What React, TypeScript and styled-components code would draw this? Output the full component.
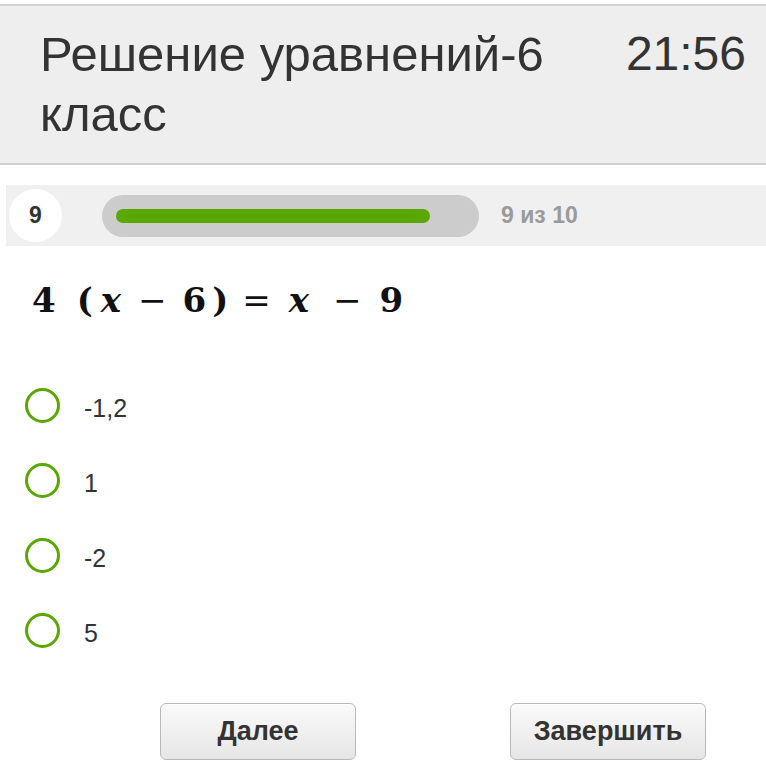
import React from "react";
import styled, { createGlobalStyle } from "styled-components";

const Global = createGlobalStyle`
  html, body { margin: 0; padding: 0; background: #ffffff; }
  body { font-family: "Liberation Sans", Arial, sans-serif; color: #333333; }
  * { box-sizing: border-box; }
`;

const Page = styled.div`
  width: 766px;
  height: 762px;
  overflow: hidden;
  padding-top: 4px;
  display: flex;
  flex-direction: column;
`;

const Header = styled.header`
  display: flex;
  justify-content: space-between;
  align-items: flex-start;
  background: #eeeeee;
  border-top: 2px solid #d4d4d4;
  border-bottom: 2px solid #d0d0d0;
  padding: 18px 20px 17px 40px;
  height: 161px;
`;

const Title = styled.h1`
  margin: 0;
  font-weight: normal;
  font-size: 49px;
  line-height: 60px;
  color: #333333;
  width: 550px;
`;

const Timer = styled.div`
  font-size: 48px;
  line-height: 60px;
  color: #333333;
`;

const ProgressRow = styled.div`
  margin: 20px 0 0 6px;
  height: 61px;
  background: #f0f0f0;
  display: flex;
  align-items: center;
  padding-left: 3px;
`;

const NumberBadge = styled.div`
  width: 53px;
  height: 53px;
  border-radius: 50%;
  background: #ffffff;
  display: flex;
  align-items: center;
  justify-content: center;
  font-weight: bold;
  font-size: 23px;
  color: #333333;
`;

const Track = styled.div`
  margin-left: 40px;
  width: 377px;
  height: 42px;
  border-radius: 21px;
  background: #cccccc;
  display: flex;
  align-items: center;
  padding: 0 14px;
`;

const Fill = styled.div`
  height: 14px;
  border-radius: 7px;
  background: #5aa700;
`;

const Counter = styled.div`
  margin-left: 22px;
  font-weight: bold;
  font-size: 23px;
  color: #9a9a9a;
`;

const Equation = styled.div`
  display: flex;
  align-items: baseline;
  margin: 34px 0 0 32px;
  height: 40px;
  font-family: "DejaVu Serif", "Liberation Serif", serif;
  font-weight: bold;
  font-size: 34px;
  line-height: 40px;
  color: #111111;
`;

const Tok = styled.span<{ $ml: number; $italic?: boolean; $thin?: boolean }>`
  margin-left: ${(p) => p.$ml}px;
  font-style: ${(p) => (p.$italic ? "italic" : "normal")};
  font-weight: ${(p) => (p.$thin ? "normal" : "bold")};
`;

const Options = styled.div`
  display: flex;
  flex-direction: column;
  margin: 68px 0 0 25px;
  gap: 40px;
`;

const Option = styled.label`
  display: flex;
  align-items: center;
  height: 35px;
  gap: 24px;
  font-size: 25px;
  color: #333333;
`;

const Radio = styled.span`
  width: 35px;
  height: 35px;
  border-radius: 50%;
  border: 3px solid #5aa700;
  background: #ffffff;
  flex: none;
`;

const OptionText = styled.span`
  padding-top: 6px;
`;

const Buttons = styled.div`
  display: flex;
  gap: 154px;
  margin: 55px 0 0 160px;
`;

const Button = styled.button`
  width: 196px;
  height: 57px;
  border: 1px solid #b9b9b9;
  border-radius: 6px;
  background: linear-gradient(#fafafa, #e6e6e6);
  font-family: "Liberation Sans", Arial, sans-serif;
  font-weight: bold;
  font-size: 27px;
  color: #333333;
  padding: 0;
  box-shadow: inset 0 1px 0 #ffffff;
`;

const answers = ["-1,2", "1", "-2", "5"];

export default function App() {
  const current = 9;
  const total = 10;
  return (
    <>
      <Global />
      <Page>
        <Header>
          <Title>Решение уравнений-6 класс</Title>
          <Timer>21:56</Timer>
        </Header>
        <ProgressRow>
          <NumberBadge>{current}</NumberBadge>
          <Track>
            <Fill style={{ width: `${(current / total) * 100}%` }} />
          </Track>
          <Counter>
            {current} из {total}
          </Counter>
        </ProgressRow>
        <Equation>
          <Tok $ml={0}>4</Tok>
          <Tok $ml={21}>(</Tok>
          <Tok $ml={8} $italic>x</Tok>
          <Tok $ml={17} $thin>−</Tok>
          <Tok $ml={16}>6</Tok>
          <Tok $ml={6}>)</Tok>
          <Tok $ml={14} $thin>=</Tok>
          <Tok $ml={18} $italic>x</Tok>
          <Tok $ml={24} $thin>−</Tok>
          <Tok $ml={18}>9</Tok>
        </Equation>
        <Options>
          {answers.map((a) => (
            <Option key={a}>
              <Radio />
              <OptionText>{a}</OptionText>
            </Option>
          ))}
        </Options>
        <Buttons>
          <Button>Далее</Button>
          <Button>Завершить</Button>
        </Buttons>
      </Page>
    </>
  );
}
